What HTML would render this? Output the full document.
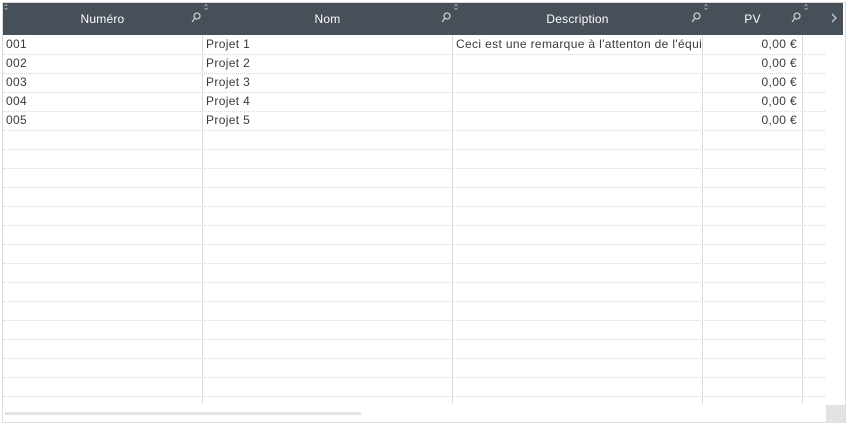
<html><head><style>
body{margin:0;width:848px;height:424px;background:#fff;font-family:"Liberation Sans",sans-serif;font-size:12px;color:#3a3a3a;position:relative;overflow:hidden}
.a{position:absolute}
.hd{left:3px;top:3px;width:840px;height:32px;background:#474f58}
.ht{top:12px;color:#fff;text-align:center;letter-spacing:0.2px}
.row{left:3px;width:822px;height:0;border-top:1px dotted #d8d8d8}
.vl{top:35px;width:1px;height:369px;background:#dcdcdc}
.t{height:19px;line-height:19px;white-space:nowrap;overflow:hidden;letter-spacing:0.35px}
</style></head><body>
<div class="a" style="left:2px;top:2px;width:842px;height:419px;border:1px solid #dcdcdc"></div>
<div class="a hd"></div>
<div class="a ht" style="left:3px;width:199px">Numéro</div>
<div class="a ht" style="left:203px;width:249px">Nom</div>
<div class="a ht" style="left:453px;width:249px">Description</div>
<div class="a ht" style="left:703px;width:99px">PV</div>
<svg class="a" style="left:0;top:0" width="848" height="40">
<g stroke="#c8ccd0" stroke-width="1.3" fill="none">
<circle cx="197" cy="16" r="3"/><line x1="195" y1="18" x2="192" y2="22"/>
<circle cx="447" cy="16" r="3"/><line x1="445" y1="18" x2="442" y2="22"/>
<circle cx="697" cy="16" r="3"/><line x1="695" y1="18" x2="692" y2="22"/>
<circle cx="797" cy="16" r="3"/><line x1="795" y1="18" x2="792" y2="22"/>
<polyline points="832,14 836,18 832,22"/>
</g>
<g stroke="#b8bcc0" stroke-width="0.8" fill="none">
<polyline points="4.5,6 6,4.5 7.5,6"/><polyline points="4.5,8 6,9.5 7.5,8"/>
<polyline points="204.5,6 206,4.5 207.5,6"/><polyline points="204.5,8 206,9.5 207.5,8"/>
<polyline points="454.5,6 456,4.5 457.5,6"/><polyline points="454.5,8 456,9.5 457.5,8"/>
<polyline points="704.5,6 706,4.5 707.5,6"/><polyline points="704.5,8 706,9.5 707.5,8"/>
<polyline points="804.5,6 806,4.5 807.5,6"/><polyline points="804.5,8 806,9.5 807.5,8"/>
</g></svg>
<div class="a vl" style="left:202px"></div>
<div class="a vl" style="left:452px"></div>
<div class="a vl" style="left:702px"></div>
<div class="a vl" style="left:802px"></div>
<div id="rows"></div>
<script>
var h='';for(var k=0;k<19;k++){h+='<div class="a row" style="top:'+(54+19*k)+'px"></div>';}
var d=[['001','Projet 1','Ceci est une remarque à l\'attenton de l\'équipe'],['002','Projet 2',''],['003','Projet 3',''],['004','Projet 4',''],['005','Projet 5','']];
d.forEach(function(r,i){var y=35+19*i;
h+='<div class="a t" style="left:6px;top:'+y+'px">'+r[0]+'</div>';
h+='<div class="a t" style="left:206px;top:'+y+'px">'+r[1]+'</div>';
h+='<div class="a t" style="left:456px;width:246px;top:'+y+'px">'+r[2]+'</div>';
h+='<div class="a t" style="left:703px;width:94px;text-align:right;top:'+y+'px">0,00 €</div>';});
document.getElementById('rows').innerHTML=h;
</script>
<div class="a" style="left:5px;top:412px;width:356px;height:3px;background:#e2e2e2"></div>
<div class="a" style="left:826px;top:405px;width:19px;height:18px;background:#e2e2e2"></div>
</body></html>
